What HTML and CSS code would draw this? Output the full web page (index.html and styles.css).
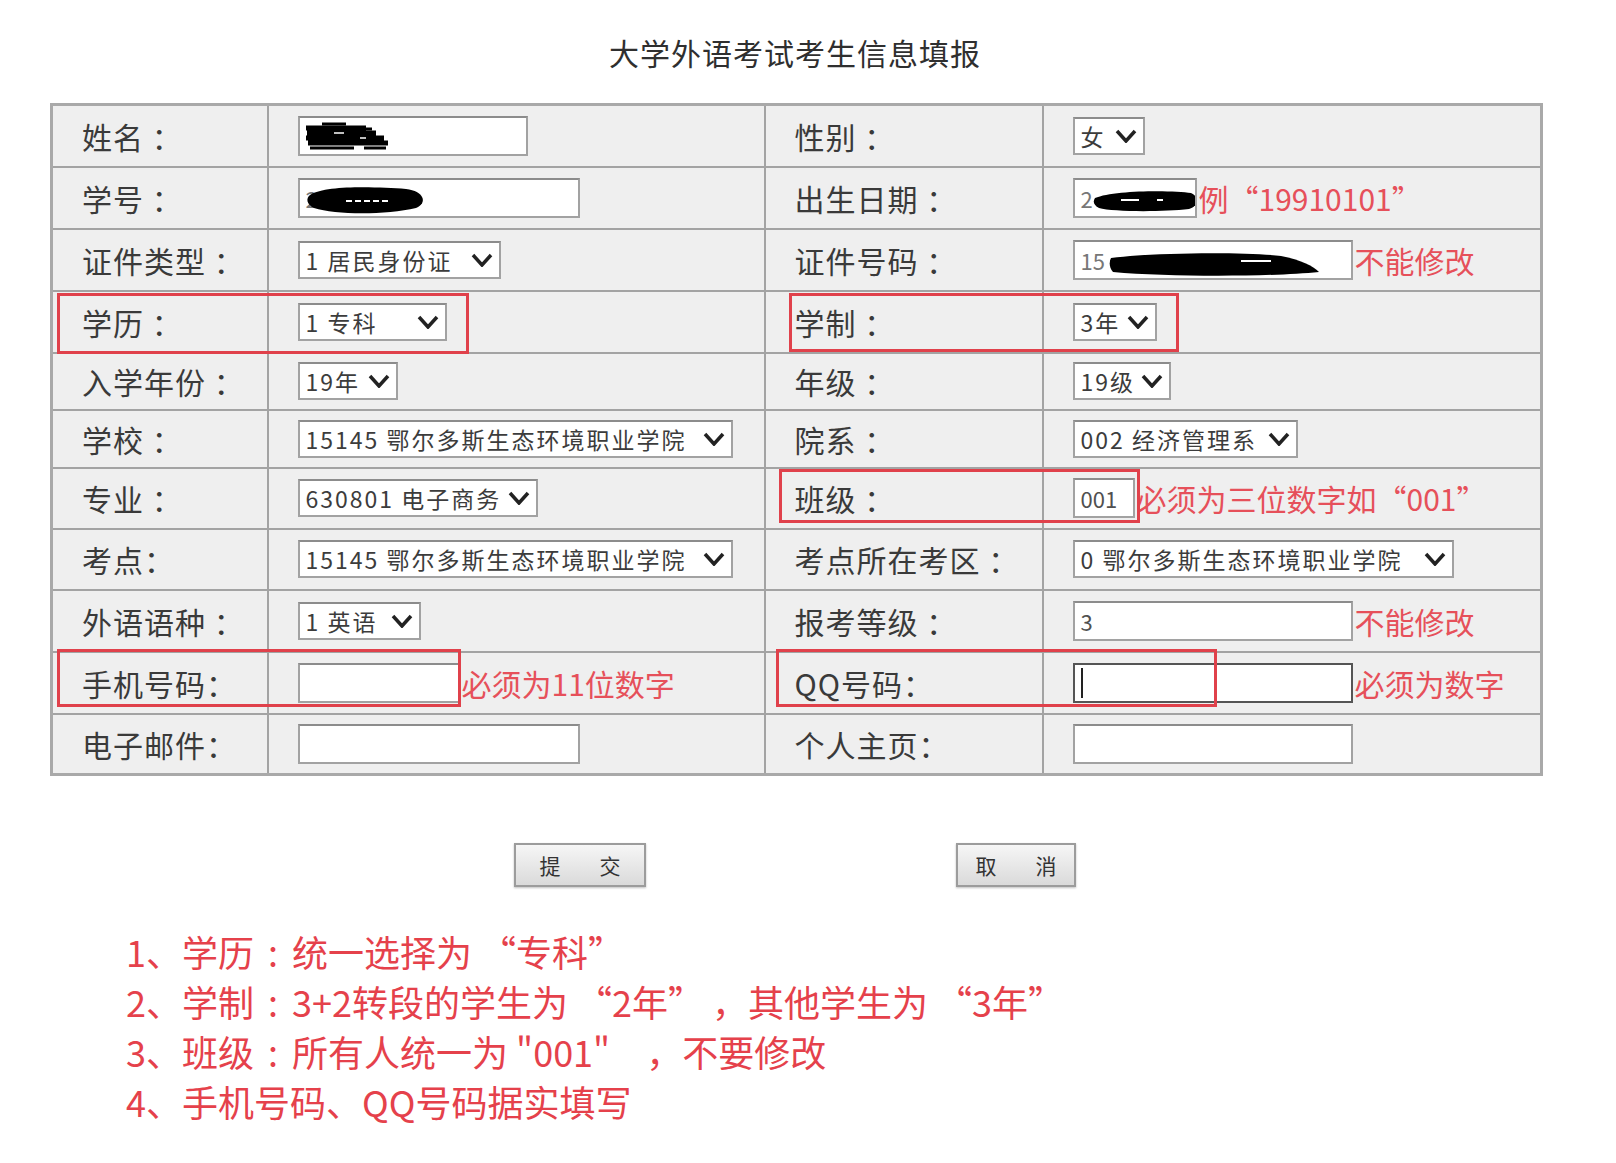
FILE: index.html
```html
<!DOCTYPE html>
<html lang="zh-CN">
<head>
<meta charset="UTF-8">
<title>大学外语考试考生信息填报</title>
<link rel="stylesheet" href="styles.css">
</head>
<body>

<div class="page">
  <h1 class="title">大学外语考试考生信息填报</h1>

  <div class="form-wrap">
    <table class="info">
      <colgroup>
        <col class="c-label"><col class="c-value"><col class="c-label2"><col class="c-value2">
      </colgroup>
      <tr class="r62">
        <td class="label">姓名 ：</td>
        <td><div class="cell">
          <div class="field w230">
            <svg class="blot" style="left:4px;top:4px" width="86" height="28" viewBox="0 0 86 28">
              <path d="M2 6 H62 M3 11 H72 M2 16 H80 M4 21 H84" stroke="#000" stroke-width="5"/>
              <path d="M18 2 H42 M50 7 H68 M6 26 H50 M60 26 H82" stroke="#000" stroke-width="3"/>
              <path d="M30 11 H40 M56 16 H62" stroke="#fff" stroke-width="1.5"/>
            </svg>
          </div>
        </div></td>
        <td class="label">性别 ：</td>
        <td><div class="cell">
          <div class="select w72"><span>女</span><svg width="22" height="14" viewBox="0 0 22 14"><polyline points="2,2 11,12 20,2" fill="none" stroke="#222" stroke-width="3.5"/></svg></div>
        </div></td>
      </tr>
      <tr class="r62">
        <td class="label">学号 ：</td>
        <td><div class="cell">
          <div class="field w282">
            <span class="muted">20</span>
            <svg class="blot" style="left:6px;top:5px" width="122" height="30" viewBox="0 0 122 30">
              <path d="M4 10 C20 0 70 2 100 4 C118 6 122 18 110 23 C80 30 30 30 8 23 C0 19 0 13 4 10 Z" fill="#000"/>
              <path d="M40 16 H82" stroke="#fff" stroke-width="2" stroke-dasharray="6 3"/>
            </svg>
          </div>
        </div></td>
        <td class="label">出生日期 ：</td>
        <td><div class="cell">
          <div class="field w124">
            <span class="muted">2</span>
            <svg class="blot" style="left:18px;top:10px" width="106" height="22" viewBox="0 0 106 22">
              <path d="M2 8 C20 0 80 0 98 3 C106 6 106 16 96 19 C70 22 20 22 6 18 C0 15 0 11 2 8 Z" fill="#000"/>
              <path d="M28 10 H46 M64 10 H70" stroke="#fff" stroke-width="2"/>
            </svg>
          </div>
          <span class="note">例“19910101”</span>
        </div></td>
      </tr>
      <tr class="r62">
        <td class="label">证件类型 ：</td>
        <td><div class="cell">
          <div class="select w203"><span>1 居民身份证</span><svg width="22" height="14" viewBox="0 0 22 14"><polyline points="2,2 11,12 20,2" fill="none" stroke="#222" stroke-width="3.5"/></svg></div>
        </div></td>
        <td class="label">证件号码 ：</td>
        <td><div class="cell">
          <div class="field w280">
            <span class="muted">15</span>
            <svg class="blot" style="left:34px;top:10px" width="214" height="26" viewBox="0 0 214 26">
              <path d="M2 6 C50 0 140 0 172 4 C192 8 204 14 210 20 C160 25 60 25 4 20 C0 15 0 10 2 6 Z" fill="#000"/>
              <path d="M132 9 H162" stroke="#fff" stroke-width="2"/>
            </svg>
          </div>
          <span class="note">不能修改</span>
        </div></td>
      </tr>
      <tr class="r62">
        <td class="label">学历 ：</td>
        <td><div class="cell">
          <div class="select w149"><span>1 专科</span><svg width="22" height="14" viewBox="0 0 22 14"><polyline points="2,2 11,12 20,2" fill="none" stroke="#222" stroke-width="3.5"/></svg></div>
        </div></td>
        <td class="label">学制 ：</td>
        <td><div class="cell">
          <div class="select w84"><span>3年</span><svg width="22" height="14" viewBox="0 0 22 14"><polyline points="2,2 11,12 20,2" fill="none" stroke="#222" stroke-width="3.5"/></svg></div>
        </div></td>
      </tr>
      <tr class="r57">
        <td class="label">入学年份 ：</td>
        <td><div class="cell">
          <div class="select w100"><span>19年</span><svg width="22" height="14" viewBox="0 0 22 14"><polyline points="2,2 11,12 20,2" fill="none" stroke="#222" stroke-width="3.5"/></svg></div>
        </div></td>
        <td class="label">年级 ：</td>
        <td><div class="cell">
          <div class="select w98"><span>19级</span><svg width="22" height="14" viewBox="0 0 22 14"><polyline points="2,2 11,12 20,2" fill="none" stroke="#222" stroke-width="3.5"/></svg></div>
        </div></td>
      </tr>
      <tr class="r58">
        <td class="label">学校 ：</td>
        <td><div class="cell">
          <div class="select w435"><span>15145 鄂尔多斯生态环境职业学院</span><svg width="22" height="14" viewBox="0 0 22 14"><polyline points="2,2 11,12 20,2" fill="none" stroke="#222" stroke-width="3.5"/></svg></div>
        </div></td>
        <td class="label">院系 ：</td>
        <td><div class="cell">
          <div class="select w225"><span>002 经济管理系</span><svg width="22" height="14" viewBox="0 0 22 14"><polyline points="2,2 11,12 20,2" fill="none" stroke="#222" stroke-width="3.5"/></svg></div>
        </div></td>
      </tr>
      <tr class="r61">
        <td class="label">专业 ：</td>
        <td><div class="cell">
          <div class="select w240"><span>630801 电子商务</span><svg width="22" height="14" viewBox="0 0 22 14"><polyline points="2,2 11,12 20,2" fill="none" stroke="#222" stroke-width="3.5"/></svg></div>
        </div></td>
        <td class="label">班级 ：</td>
        <td><div class="cell">
          <div class="field w62"><span>001</span></div>
          <span class="note">必须为三位数字如“001”</span>
        </div></td>
      </tr>
      <tr class="r61">
        <td class="label">考点：</td>
        <td><div class="cell">
          <div class="select w435"><span>15145 鄂尔多斯生态环境职业学院</span><svg width="22" height="14" viewBox="0 0 22 14"><polyline points="2,2 11,12 20,2" fill="none" stroke="#222" stroke-width="3.5"/></svg></div>
        </div></td>
        <td class="label">考点所在考区 ：</td>
        <td><div class="cell">
          <div class="select w381"><span>0 鄂尔多斯生态环境职业学院</span><svg width="22" height="14" viewBox="0 0 22 14"><polyline points="2,2 11,12 20,2" fill="none" stroke="#222" stroke-width="3.5"/></svg></div>
        </div></td>
      </tr>
      <tr class="r62">
        <td class="label">外语语种 ：</td>
        <td><div class="cell">
          <div class="select w123"><span>1 英语</span><svg width="22" height="14" viewBox="0 0 22 14"><polyline points="2,2 11,12 20,2" fill="none" stroke="#222" stroke-width="3.5"/></svg></div>
        </div></td>
        <td class="label">报考等级 ：</td>
        <td><div class="cell">
          <div class="field w280"><span>3</span></div>
          <span class="note">不能修改</span>
        </div></td>
      </tr>
      <tr class="r62">
        <td class="label">手机号码：</td>
        <td><div class="cell">
          <div class="field w162"></div>
          <span class="note">必须为11位数字</span>
        </div></td>
        <td class="label">QQ号码：</td>
        <td><div class="cell">
          <div class="field w280 focused"><i class="caret"></i></div>
          <span class="note">必须为数字</span>
        </div></td>
      </tr>
      <tr class="r61">
        <td class="label">电子邮件：</td>
        <td><div class="cell">
          <div class="field w282"></div>
        </div></td>
        <td class="label">个人主页：</td>
        <td><div class="cell">
          <div class="field w280"></div>
        </div></td>
      </tr>
    </table>

    <!-- red marks around the fields that need attention -->
    <div class="mark" style="left:7px;top:190px;width:412px;height:61px"></div>
    <div class="mark" style="left:739px;top:190px;width:390px;height:59px"></div>
    <div class="mark" style="left:729px;top:366px;width:361px;height:54px"></div>
    <div class="mark" style="left:7px;top:546px;width:404px;height:58px"></div>
    <div class="mark" style="left:726px;top:546px;width:441px;height:58px"></div>
  </div>

  <div class="buttons">
    <button class="btn btn-submit">提　交</button>
    <button class="btn btn-cancel">取　消</button>
  </div>

  <ol class="tips">
    <li>1、学历<span class="colon">:</span>统一选择为 “专科”</li>
    <li>2、学制<span class="colon">:</span>3+2转段的学生为 “2年” ，其他学生为 “3年”</li>
    <li>3、班级<span class="colon">:</span>所有人统一为 "001"&emsp;，不要修改</li>
    <li>4、手机号码、QQ号码据实填写</li>
  </ol>
</div>

</body>
</html>
```

FILE: styles.css
```css
body {
  margin: 0;
  background: #fff;
  font-family: "Noto Sans CJK SC", "Noto Sans", sans-serif;
  color: #333;
}
.page {
  width: 1616px;
  height: 1163px;
  overflow: hidden;
}
.title {
  margin: 0;
  height: 103px;
  line-height: 104px;
  width: 1490px;
  margin-left: 50px;
  text-align: center;
  font-size: 30px;
  font-weight: normal;
  letter-spacing: 1px;
  color: #2f2f2f;
}

/* ---- form table ---- */
.form-wrap {
  position: relative;
  margin-left: 50px;
  width: 1490px;
}
.info {
  width: 1490px;
  table-layout: fixed;
  border-collapse: collapse;
  background: #efefef;
  border: 3px solid #a9a9a9;
}
.c-label { width: 216px; }
.c-value { width: 497px; }
.c-label2 { width: 278px; }
.c-value2 { width: 499px; }
.info td {
  border: 2px solid #a3a3a3;
  padding: 0 0 0 29px;
  vertical-align: middle;
}
.r57 { height: 57px; }
.r58 { height: 58px; }
.r61 { height: 61px; }
.r62 { height: 62px; }
.label {
  font-size: 30px;
  letter-spacing: 1px;
  color: #3a3a3a;
  white-space: nowrap;
}
.cell {
  display: flex;
  align-items: center;
}

.field, .select {
  box-sizing: border-box;
  height: 40px;
  background: #fff;
  border: 2px solid #a2a2a2;
  border-top-color: #8c8c8c;
  font-size: 22px;
  color: #505050;
  display: flex;
  align-items: center;
  padding: 0 6px;
  position: relative;
  white-space: nowrap;
  overflow: hidden;
}
.select {
  height: 38px;
  justify-content: space-between;
  font-size: 23px;
  letter-spacing: 2px;
  color: #3c3c3c;
}
.select svg { flex: none; margin-left: 4px; }
.muted { color: #777; }
.field.focused { border-color: #555; }
.caret {
  display: block;
  width: 2px;
  height: 30px;
  background: #222;
}
.blot { position: absolute; }

.w62 { width: 62px; }
.w72 { width: 72px; }
.w84 { width: 84px; }
.w98 { width: 98px; }
.w100 { width: 100px; }
.w123 { width: 123px; }
.w124 { width: 124px; }
.w149 { width: 149px; }
.w162 { width: 162px; }
.w203 { width: 203px; }
.w225 { width: 225px; }
.w230 { width: 230px; }
.w240 { width: 240px; }
.w280 { width: 280px; }
.w282 { width: 282px; }
.w381 { width: 381px; }
.w435 { width: 435px; }

.note {
  margin-left: 2px;
  font-size: 30px;
  color: #e6505a;
  white-space: nowrap;
}

.mark {
  position: absolute;
  box-sizing: border-box;
  border: 3px solid #e0414b;
}

/* ---- buttons ---- */
.buttons {
  display: flex;
  justify-content: center;
  gap: 310px;
  width: 1490px;
  margin: 67px 0 0 50px;
}
.btn {
  height: 44px;
  font-family: "Noto Sans CJK SC", sans-serif;
  font-size: 21px;
  color: #333;
  letter-spacing: 9px;
  text-indent: 9px;
  background: linear-gradient(#f6f6f6, #dadada);
  border: 2px solid #9c9c9c;
  box-shadow: 0 1px 2px rgba(0, 0, 0, 0.25);
  padding: 0;
}
.btn-submit { width: 132px; }
.btn-cancel { width: 120px; }

/* ---- tips ---- */
.tips {
  list-style: none;
  margin: 39px 0 0 126px;
  padding: 0;
  font-size: 36px;
  line-height: 50px;
  color: #e5414b;
}
.colon {
  display: inline-block;
  width: 38px;
  text-align: center;
}
```
